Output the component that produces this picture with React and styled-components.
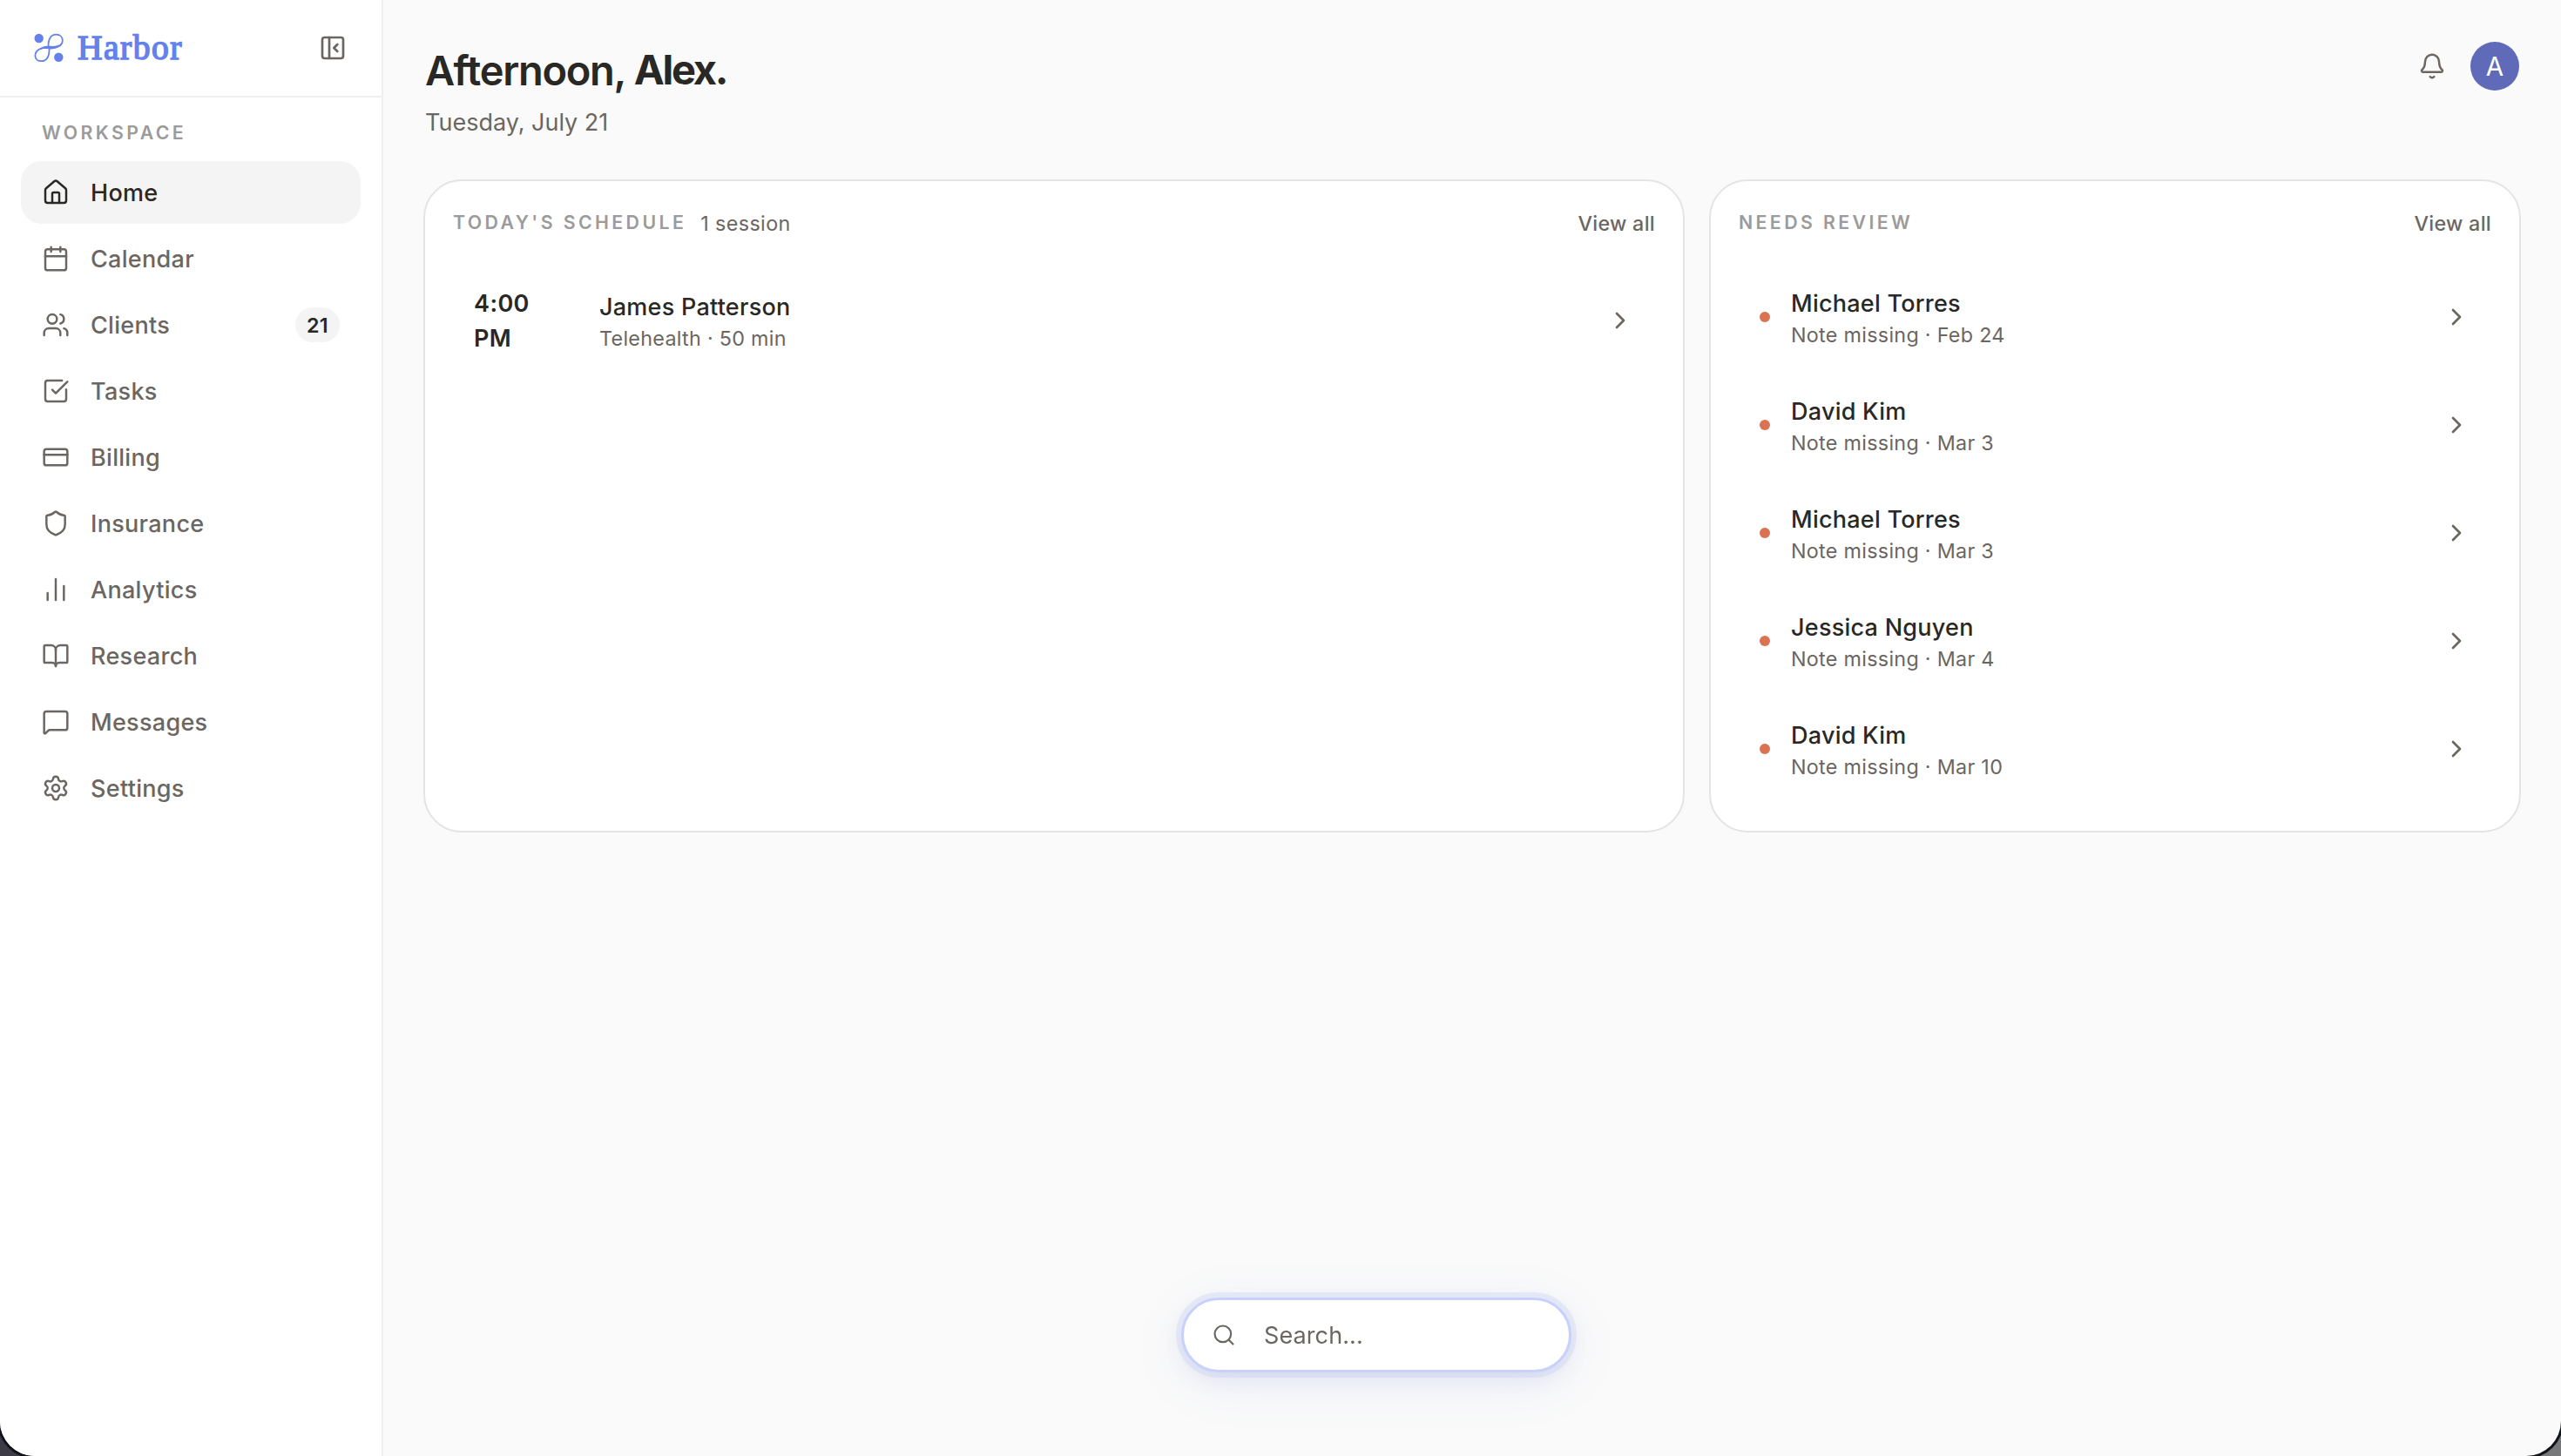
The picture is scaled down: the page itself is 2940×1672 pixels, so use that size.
import styled, { createGlobalStyle } from "styled-components";
import {
  Bell,
  BookOpen,
  Calendar,
  ChevronRight,
  CreditCard,
  House,
  MessageSquare,
  PanelLeftClose,
  Search,
  Settings,
  Shield,
  SquareCheckBig,
  Users,
} from "lucide-react";

const GlobalStyle = createGlobalStyle`
  * {
    box-sizing: border-box;
  }

  body {
    margin: 0;
    background: linear-gradient(90deg, #3d3c46 50%, #77787a 50%);
    font-family: Inter, "Liberation Sans", sans-serif;
    color: #292824;
  }
`;

const Window = styled.div`
  display: flex;
  height: 100vh;
  overflow: hidden;
  background-color: #fafafa;
  border-radius: 0 0 40px 40px;
  box-shadow: 0 0 0 3px #10141a;
`;

const Sidebar = styled.aside`
  display: flex;
  flex-direction: column;
  flex-shrink: 0;
  width: 440px;
  background-color: white;
  border-right: 2px solid #efefef;
`;

const SidebarHeader = styled.div`
  display: flex;
  align-items: center;
  justify-content: space-between;
  height: 112px;
  padding: 0 40px 0 38px;
  border-bottom: 2px solid #efefef;
`;

const Brand = styled.div`
  display: flex;
  align-items: center;
  gap: 15px;
  color: #6481ec;
`;

const BrandName = styled.span`
  font-family: "Liberation Serif", serif;
  font-size: 39.5px;
  line-height: 48px;
  letter-spacing: 1.5px;
  -webkit-text-stroke: 1.5px currentColor;
`;

const CollapseButton = styled.button`
  display: flex;
  padding: 0;
  border: none;
  background: none;
  color: #6b6661;
`;

const SectionLabel = styled.div`
  font-size: 21.3px;
  font-weight: 600;
  line-height: 30px;
  letter-spacing: 3.4px;
  color: #9b9b9b;
`;

const Nav = styled.nav`
  display: flex;
  flex-direction: column;
  gap: 4px;
  padding: 25px 24px 0;

  ${SectionLabel} {
    padding: 0 24px;
    margin-bottom: 14px;
  }
`;

const NavItem = styled.a`
  display: flex;
  align-items: center;
  height: 72px;
  padding: 0 24px;
  border-radius: 24px;
  font-size: 27px;
  font-weight: 500;
  letter-spacing: 0.3px;
  color: ${(props) => (props.$active ? "#292824" : "#6b6661")};
  background-color: ${(props) => (props.$active ? "#f4f4f4" : "transparent")};

  svg {
    margin-right: 24px;
  }
`;

const Badge = styled.span`
  display: flex;
  align-items: center;
  justify-content: center;
  width: 51px;
  height: 40px;
  margin-left: auto;
  border-radius: 20px;
  background-color: #f4f4f4;
  font-size: 23.3px;
  font-weight: 600;
  color: #292824;
`;

const Main = styled.main`
  flex: 1;
  padding: 48px 46px 0;
`;

const TopBar = styled.header`
  display: flex;
  justify-content: space-between;
  height: 158px;
`;

const Greeting = styled.h1`
  margin: 2px 0 0 2px;
  font-size: 47px;
  font-weight: 600;
  line-height: 62px;
  letter-spacing: -1.3px;
`;

const Name = styled.span`
  display: inline-block;
  font-weight: 700;
  line-height: 56px;
  letter-spacing: -2.3px;
  vertical-align: 1px;
`;

const Today = styled.div`
  margin: 11px 0 0 2px;
  font-size: 27px;
  line-height: 36px;
  color: #6b6661;
`;

const Actions = styled.div`
  display: flex;
  align-items: center;
  gap: 28px;
  height: 56px;
  padding-right: 2px;
  color: #6b6661;
`;

const Avatar = styled.div`
  display: flex;
  align-items: center;
  justify-content: center;
  width: 56px;
  height: 56px;
  border-radius: 50%;
  background-color: #5f6ab8;
  color: white;
  font-size: 29.5px;
`;

const Cards = styled.div`
  display: grid;
  grid-template-columns: 1448px 932px;
  gap: 28px;
  height: 747px;
`;

const Card = styled.section`
  padding: 32px;
  border: 2px solid #e4e4e4;
  border-radius: 44px;
  background-color: white;
`;

const CardHeader = styled.div`
  display: flex;
  align-items: center;
  height: 30px;
  margin-bottom: 32px;
`;

const Count = styled.span`
  margin-left: 16px;
  padding-top: 2px;
  font-size: 23.3px;
  letter-spacing: 0.4px;
  color: #6b6661;
`;

const ViewAll = styled.a`
  margin-left: auto;
  padding-top: 2px;
  font-size: 23.3px;
  font-weight: 500;
  letter-spacing: 0.3px;
  color: #6b6661;
`;

const Row = styled.div`
  display: flex;
  align-items: center;
  height: ${(props) => props.$height}px;
  padding: 0 24px;
  color: #6b6661;
`;

const Time = styled.div`
  width: 96px;
  margin-right: 48px;
  padding-top: 1px;
  font-size: 27px;
  font-weight: 600;
  line-height: 40px;
  letter-spacing: 0.4px;
  color: #292824;
`;

const Dot = styled.span`
  width: 12px;
  height: 12px;
  margin-right: 24px;
  border-radius: 50%;
  background-color: #d97353;
`;

const Details = styled.div`
  flex: 1;
  padding-top: 4px;
`;

const Person = styled.div`
  font-size: 27px;
  font-weight: 500;
  line-height: 38px;
  letter-spacing: 0.25px;
  color: #292824;
`;

const Meta = styled.div`
  font-size: 23.3px;
  line-height: 34px;
  letter-spacing: 0.3px;
`;

const SearchDock = styled.div`
  position: fixed;
  left: 220px;
  right: 0;
  bottom: 96px;
  display: flex;
  justify-content: center;
`;

const SearchBar = styled.div`
  display: flex;
  align-items: center;
  gap: 32px;
  width: 448px;
  height: 86px;
  padding: 0 32px;
  border: 3px solid #c7d1f9;
  border-radius: 43px;
  background-color: white;
  box-shadow: 0 0 0 6px rgba(100, 129, 236, 0.1),
    0 8px 24px rgba(60, 60, 130, 0.08), 0 12px 60px rgba(100, 129, 236, 0.1);
  font-size: 27px;
  letter-spacing: 0.1px;
  color: #6b6661;
`;

const Logo = () => (
  <svg width="36" height="36" viewBox="0 0 36 36" fill="none">
    <circle cx="6.7" cy="7" r="5.2" fill="currentColor" />
    <circle cx="29.3" cy="28.8" r="5.2" fill="currentColor" />
    <path
      d="M17.6 16.5C17 8 20.5 2.7 26.5 2.7C31.3 2.7 33.8 6 33.8 9.8C33.8 15 29 17 23.5 17.5C18 17.8 13 16.9 8.5 18.8C4.5 20.5 2.4 23.5 2.4 27C2.4 30.8 5.5 33.2 9.5 33.2C15.5 33.2 18.8 28 18.5 19"
      stroke="currentColor"
      strokeWidth="1.8"
    />
    <path
      d="M5 21.5C9 16.5 14 15.6 18 15.8C24 16.2 29 16 33.5 12.5C30 18 25 19.6 20 19.4C14 19 10 18.3 5 21.5Z"
      fill="currentColor"
    />
  </svg>
);

const Bars = ({ size, strokeWidth }) => (
  <svg
    width={size}
    height={size}
    viewBox="0 0 24 24"
    fill="none"
    stroke="currentColor"
    strokeWidth={strokeWidth}
    strokeLinecap="round"
  >
    <path d="M5 21v-6M12 21V3M19 21V9" />
  </svg>
);

const navItems = [
  { label: "Home", icon: House, active: true },
  { label: "Calendar", icon: Calendar },
  { label: "Clients", icon: Users, count: 21 },
  { label: "Tasks", icon: SquareCheckBig },
  { label: "Billing", icon: CreditCard },
  { label: "Insurance", icon: Shield },
  { label: "Analytics", icon: Bars },
  { label: "Research", icon: BookOpen },
  { label: "Messages", icon: MessageSquare },
  { label: "Settings", icon: Settings },
];

const reviews = [
  { name: "Michael Torres", date: "Feb 24" },
  { name: "David Kim", date: "Mar 3" },
  { name: "Michael Torres", date: "Mar 3" },
  { name: "Jessica Nguyen", date: "Mar 4" },
  { name: "David Kim", date: "Mar 10" },
];

const App = () => {
  return (
    <>
      <GlobalStyle />
      <Window>
        <Sidebar>
          <SidebarHeader>
            <Brand>
              <Logo />
              <BrandName>Harbor</BrandName>
            </Brand>
            <CollapseButton>
              <PanelLeftClose size={32} strokeWidth={2} />
            </CollapseButton>
          </SidebarHeader>
          <Nav>
            <SectionLabel>WORKSPACE</SectionLabel>
            {navItems.map(({ label, icon: Icon, active, count }) => (
              <NavItem key={label} $active={active}>
                <Icon size={32} strokeWidth={1.85} />
                {label}
                {count && <Badge>{count}</Badge>}
              </NavItem>
            ))}
          </Nav>
        </Sidebar>

        <Main>
          <TopBar>
            <div>
              <Greeting>
                Afternoon, <Name>Alex.</Name>
              </Greeting>
              <Today>Tuesday, July 21</Today>
            </div>
            <Actions>
              <Bell size={32} strokeWidth={1.85} />
              <Avatar>A</Avatar>
            </Actions>
          </TopBar>

          <Cards>
            <Card>
              <CardHeader>
                <SectionLabel>TODAY'S SCHEDULE</SectionLabel>
                <Count>1 session</Count>
                <ViewAll>View all</ViewAll>
              </CardHeader>
              <Row $height={132}>
                <Time>
                  4:00
                  <br />
                  PM
                </Time>
                <Details>
                  <Person>James Patterson</Person>
                  <Meta>Telehealth · 50 min</Meta>
                </Details>
                <ChevronRight size={32} strokeWidth={2} />
              </Row>
            </Card>

            <Card>
              <CardHeader>
                <SectionLabel>NEEDS REVIEW</SectionLabel>
                <ViewAll>View all</ViewAll>
              </CardHeader>
              {reviews.map((review, i) => (
                <Row key={i} $height={124}>
                  <Dot />
                  <Details>
                    <Person>{review.name}</Person>
                    <Meta>Note missing · {review.date}</Meta>
                  </Details>
                  <ChevronRight size={32} strokeWidth={2} />
                </Row>
              ))}
            </Card>
          </Cards>
        </Main>

        <SearchDock>
          <SearchBar>
            <Search size={28} strokeWidth={1.85} />
            Search...
          </SearchBar>
        </SearchDock>
      </Window>
    </>
  );
};

export default App;
